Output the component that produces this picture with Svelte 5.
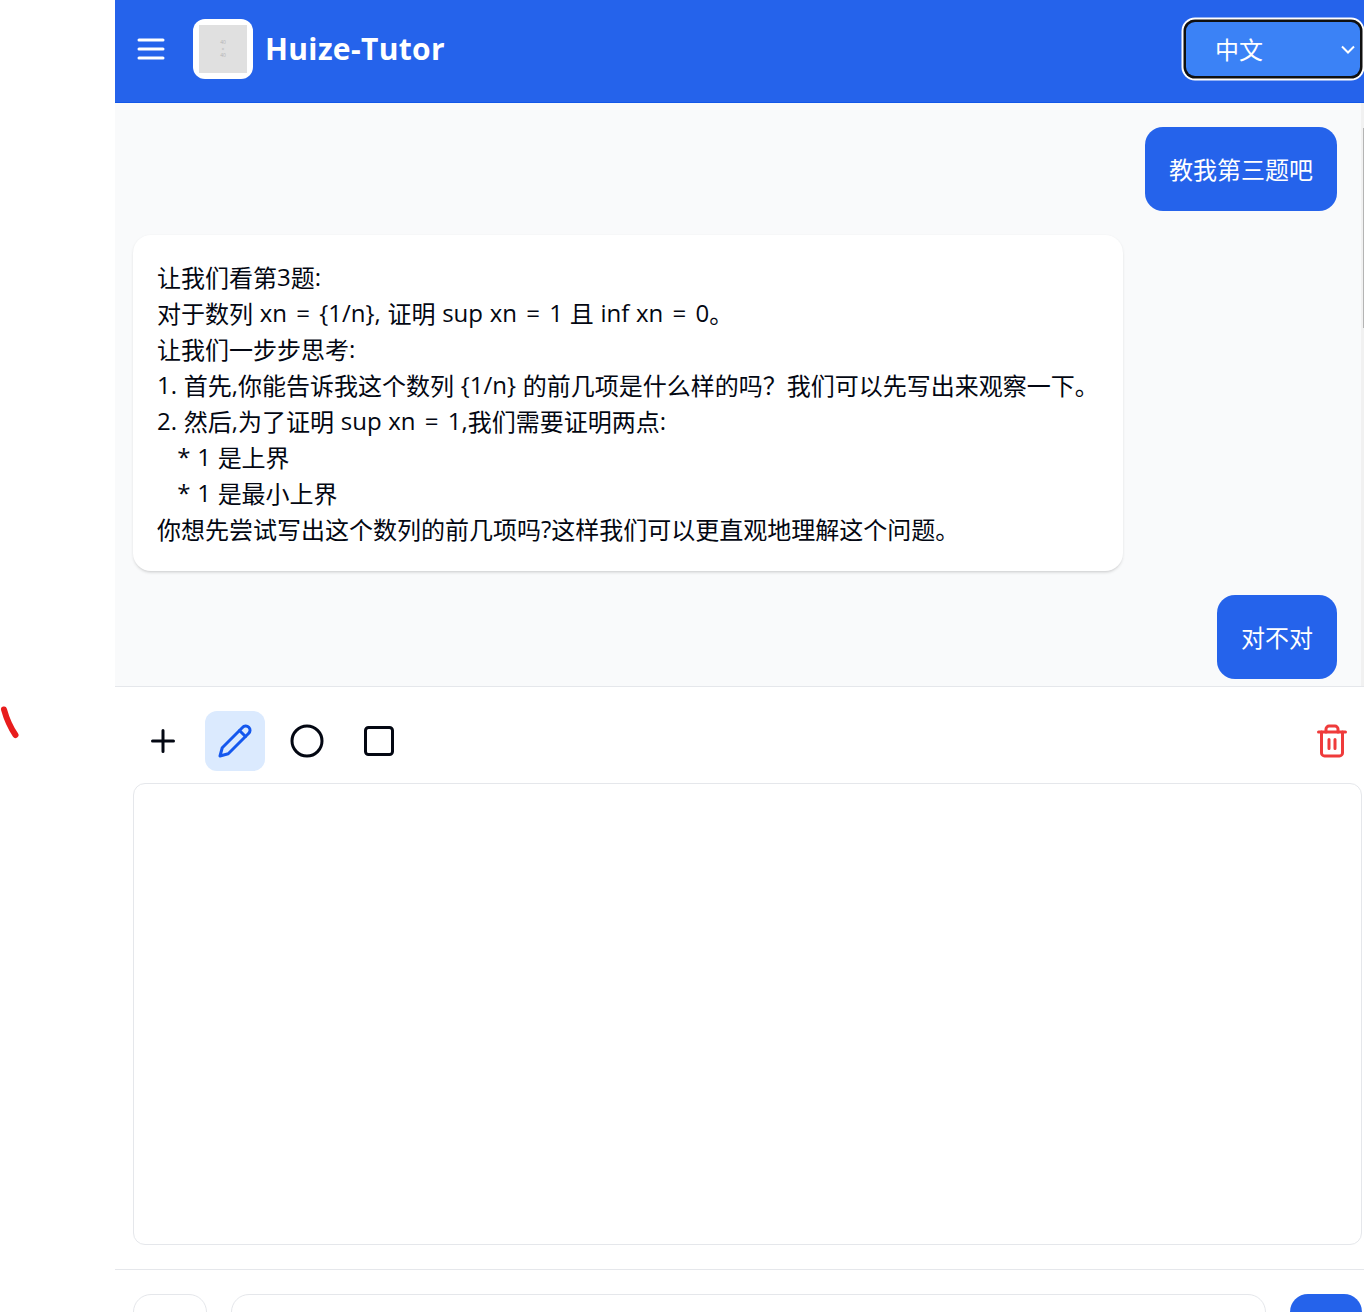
<script>
  // Latin runs are kept apart from Chinese ones so that each can use its own spacing.
  const lines = [
    '让我们看第3题:',
    '对于数列 xn = {1/n}, 证明 sup xn = 1 且 inf xn = 0。',
    '让我们一步步思考:',
    '1. 首先,你能告诉我这个数列 {1/n} 的前几项是什么样的吗？我们可以先写出来观察一下。',
    '2. 然后,为了证明 sup xn = 1,我们需要证明两点:',
    '   * 1 是上界',
    '   * 1 是最小上界',
    '你想先尝试写出这个数列的前几项吗?这样我们可以更直观地理解这个问题。'
  ];
  const split = (line) => line.match(/=|[\x20-\x3c\x3e-\x7e]+|[^\x20-\x7e]+/g);
  const kind = (run) => (run === '=' ? 'equals' : run.charCodeAt(0) < 128 ? 'latin' : 'han');
  let tool = $state('pencil');
</script>

<div class="page">
  <aside class="margin">
    <svg class="scribble" width="24" height="36" viewBox="0 0 24 36"><path d="M4 4.500Q8 19 15.500 30" /></svg>
  </aside>

  <main class="app">
    <header>
      <button class="menu" aria-label="菜单">
        <svg class="icon" viewBox="0 0 24 24"><path d="M4 6h16M4 12h16M4 18h16" /></svg>
      </button>
      <div class="logo"><div class="placeholder"><span>40</span><span>×</span><span>40</span></div></div>
      <h1>Huize-Tutor</h1>
      <button class="language">
        <span>中文</span>
        <svg width="14" height="10" viewBox="0 0 14 10"><path d="M1 1.500l6 6 6-6" /></svg>
      </button>
    </header>

    <section class="chat">
      <div class="messages">
        <div class="bubble user">教我第三题吧</div>
        <div class="bubble tutor">
          {#each lines as line}
            <p>{#each split(line) as run}<span class={kind(run)}>{run}</span>{/each}</p>
          {/each}
        </div>
        <div class="bubble user">对不对</div>
      </div>
      <div class="track"><div class="thumb"></div></div>
    </section>

    <section class="board">
      <div class="toolbar">
        <button aria-label="添加" class:active={tool === 'plus'} onclick={() => (tool = 'plus')}>
          <svg class="icon" viewBox="0 0 24 24"><path d="M5 12h14M12 5v14" /></svg>
        </button>
        <button aria-label="画笔" class:active={tool === 'pencil'} onclick={() => (tool = 'pencil')}>
          <svg class="icon" viewBox="0 0 24 24"><path d="M17 3a2.850 2.830 0 1 1 4 4L7.500 20.500 2 22l1.500-5.500Z" /><path d="m15 5 4 4" /></svg>
        </button>
        <button aria-label="圆形" class:active={tool === 'circle'} onclick={() => (tool = 'circle')}>
          <svg class="icon" viewBox="0 0 24 24"><circle cx="12" cy="12" r="10" /></svg>
        </button>
        <button aria-label="方形" class:active={tool === 'square'} onclick={() => (tool = 'square')}>
          <svg class="icon" viewBox="0 0 24 24"><rect x="3" y="3" width="18" height="18" rx="2" /></svg>
        </button>
        <button aria-label="清空" class="clear">
          <svg class="icon" viewBox="0 0 24 24"><path d="M3 6h18" /><path d="M19 6v14c0 1-1 2-2 2H7c-1 0-2-1-2-2V6" /><path d="M8 6V4c0-1 1-2 2-2h4c1 0 2 1 2 2v2" /><path d="M10 11v6M14 11v6" /></svg>
        </button>
      </div>
      <div class="canvas"></div>
    </section>

    <footer>
      <div class="attach"></div>
      <div class="field"></div>
      <div class="send"></div>
    </footer>
  </main>
</div>

<style>
  :global(body) {
    background: #fff;
    overflow: hidden;
  }
  .page {
    display: flex;
    width: 1364px;
    height: 1312px;
    overflow: hidden;
    font: 24px/36px 'Open Sans', 'Noto Sans CJK SC', sans-serif;
    color: #030712;
  }
  .page * {
    box-sizing: border-box;
  }
  button {
    border: 0;
    padding: 0;
    background: none;
    font: inherit;
    color: inherit;
  }
  .margin {
    flex: 0 0 115px;
    padding-top: 705px;
  }
  .scribble {
    display: block;
    fill: none;
    stroke: #e81c1c;
    stroke-width: 6;
    stroke-linecap: round;
  }
  .app {
    flex: 1;
    min-width: 0;
    display: flex;
    flex-direction: column;
  }
  .icon {
    display: block;
    width: 36px;
    height: 36px;
    fill: none;
    stroke: currentColor;
    stroke-width: 2;
    stroke-linecap: round;
    stroke-linejoin: round;
  }
  header {
    flex: 0 0 103px;
    display: flex;
    align-items: flex-start;
    padding: 19px 4px 0 18px;
    background: #2563eb;
    border-bottom: 1px solid #1257e8;
    color: #fff;
  }
  .menu {
    margin: 12px 24px 0 0;
  }
  .logo {
    width: 60px;
    height: 60px;
    padding: 6px;
    border-radius: 12px;
    background: #fff;
  }
  .placeholder {
    height: 48px;
    display: flex;
    flex-direction: column;
    align-items: center;
    justify-content: center;
    background: #e0e0e0;
    color: #b4b4b4;
    font-size: 5px;
    line-height: 6.500px;
  }
  h1 {
    margin: 9px auto 0 12px;
    font-size: 30px;
    line-height: 42px;
    font-weight: 700;
    letter-spacing: 0.350px;
  }
  .language {
    display: flex;
    align-items: center;
    justify-content: space-between;
    width: 174px;
    height: 54px;
    margin: 3px 0 0;
    padding: 2px 5px 0 29px;
    border-radius: 9px;
    background: #3b82f6;
    box-shadow: 0 0 0 2.500px #101010, 0 0 0 4.500px #fff;
  }
  .language svg {
    fill: none;
    stroke: #fff;
    stroke-width: 2;
  }
  .chat {
    flex: 0 0 583px;
    display: flex;
    overflow: hidden;
    background: #f9fafb;
  }
  .messages {
    flex: 1;
    display: flex;
    flex-direction: column;
    gap: 24px;
    padding: 24px 24px 0 18px;
  }
  .bubble {
    flex: none;
    padding: 24px;
    border-radius: 18px;
  }
  .user {
    align-self: flex-end;
    padding: 25px 24px 23px;
    background: #2563eb;
    color: #fff;
  }
  .tutor {
    align-self: flex-start;
    width: 990px;
    background: #fff;
    box-shadow: 0 1.500px 3px rgba(0, 0, 0, 0.09), 0 1.500px 2px -1px rgba(0, 0, 0, 0.08);
  }
  p {
    height: 36px;
    margin: 0;
    white-space: pre;
  }
  .han {
    vertical-align: -1px;
  }
  .latin {
    word-spacing: 0.500px;
  }
  .equals {
    margin: 0 2.500px;
  }
  .track {
    flex: 0 0 3px;
    padding: 25px 0 0 2px;
    background: #f1f1f1;
  }
  .thumb {
    height: 200px;
    background: #b4b4b4;
  }
  .board {
    flex: 0 0 583px;
    padding: 24px 2px 0 18px;
    border-top: 1px solid #e5e7eb;
  }
  .toolbar {
    display: flex;
    gap: 12px;
    margin-bottom: 12px;
  }
  .toolbar button {
    display: grid;
    place-items: center;
    width: 60px;
    height: 60px;
    border-radius: 12px;
  }
  .toolbar .active {
    background: #dbeafe;
    color: #1558ee;
  }
  .toolbar .clear {
    margin-left: auto;
    color: #ef3b3b;
  }
  .canvas {
    height: 462px;
    border: 1px solid #e5e7eb;
    border-radius: 12px;
  }
  footer {
    flex: 1;
    display: flex;
    gap: 24px;
    padding: 24px 2px 0 18px;
    border-top: 1px solid #e5e7eb;
    overflow: hidden;
  }
  .attach,
  .field,
  .send {
    height: 74px;
    border-radius: 18px;
  }
  .attach {
    width: 74px;
    border: 1px solid #e5e7eb;
  }
  .field {
    flex: 1;
    border: 1px solid #e5e7eb;
  }
  .send {
    width: 72px;
    background: #2563eb;
  }
</style>
